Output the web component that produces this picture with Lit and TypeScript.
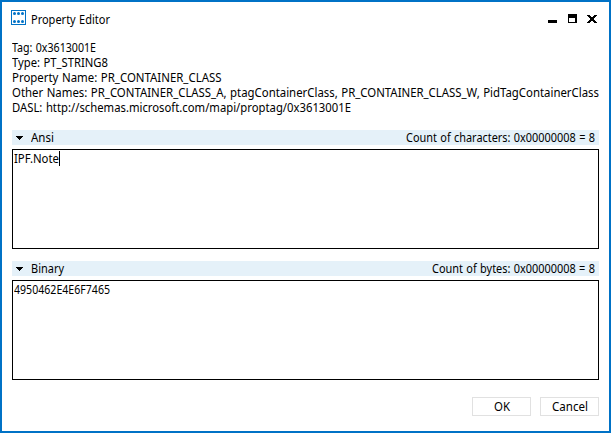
import { LitElement, html, css, svg } from "lit";
import { customElement, property } from "lit/decorators.js";

/** One line of text, condensed so that it spans a given width. */
@customElement("fit-text")
class FitText extends LitElement {
  @property({ type: Number }) width = 0;
  @property() text = "";
  static styles = css`
    :host { display: block; white-space: pre; }
    div { display: block; }
    span { display: inline-block; word-spacing: 0.6px; transform-origin: 0 0; vertical-align: top; }
  `;
  async firstUpdated() {
    await document.fonts.ready;
    const span = this.renderRoot.querySelector("span") as HTMLElement;
    const natural = span.getBoundingClientRect().width;
    span.style.transform = `scaleX(${this.width / natural})`;
  }
  render() {
    return html`<div style="width:${this.width}px"><span>${this.text}</span></div>`;
  }
}

@customElement("value-section")
class ValueSection extends LitElement {
  @property() label = "";
  @property({ type: Number }) labelWidth = 0;
  @property() count = "";
  @property({ type: Number }) countWidth = 0;
  @property() value = "";
  @property({ type: Number }) valueWidth = 0;
  @property({ type: Boolean }) focused = false;
  static styles = css`
    :host { display: block; }
    .head {
      display: flex; align-items: center; height: 15px; padding: 0 4px;
      background: #e5f1f9; line-height: 15px; margin-bottom: 4px;
    }
    .arrow { width: 7px; height: 4px; margin-right: 8px; display: block; }
    .count { margin-left: auto; }
    .box {
      box-sizing: border-box; height: 100px; border: 1px solid #000;
      padding: 1px; display: flex; align-items: flex-start; line-height: 15px;
    }
    .caret { width: 1px; height: 15px; background: #000; }
  `;
  render() {
    return html`
      <div class="head">
        <svg class="arrow" viewBox="0 0 7 4" shape-rendering="crispEdges">
          <path d="M0 0H7V1H6V2H5V3H4V4H3V3H2V2H1V1H0Z" />
        </svg>
        <fit-text .text=${this.label} .width=${this.labelWidth}></fit-text>
        <fit-text class="count" .text=${this.count} .width=${this.countWidth}></fit-text>
      </div>
      <div class="box">
        <fit-text .text=${this.value} .width=${this.valueWidth}></fit-text>
        ${this.focused ? html`<i class="caret"></i>` : null}
      </div>
    `;
  }
}

const details: [string, number][] = [
  ["Tag: 0x3613001E", 84],
  ["Type: PT_STRING8", 96],
  ["Property Name: PR_CONTAINER_CLASS", 209.5],
  ["Other Names: PR_CONTAINER_CLASS_A, ptagContainerClass, PR_CONTAINER_CLASS_W, PidTagContainerClass", 587],
  ["DASL: http://schemas.microsoft.com/mapi/proptag/0x3613001E", 339],
];

@customElement("app-root")
class AppRoot extends LitElement {
  static styles = css`
    :host {
      display: flex; flex-direction: column; box-sizing: border-box;
      width: 611px; height: 433px; border: 2px solid #0072c6; background: #fff;
      padding: 0 10px; color: #000;
      font: 11.9px/15px "Noto Sans", "Open Sans", sans-serif;
    }
    .title { display: flex; height: 23px; padding-top: 8px; margin-left: -1px; box-sizing: content-box; }
    .logo { width: 15px; height: 15px; display: block; margin-right: 5px; }
    .caption { margin-top: 2px; }
    .controls { display: block; margin: 4px 2px 0 auto; width: 49px; height: 9px; }
    .details { margin-top: 7px; height: 76px; }
    .first { margin-top: 14px; }
    .second { margin-top: 12px; }
    .actions { display: flex; justify-content: flex-end; gap: 9px; margin-top: 17px; }
    .btn {
      box-sizing: border-box; width: 59px; height: 19px; border: 1px solid #e1e1e1;
      display: flex; justify-content: center; padding-top: 1px;
    }
  `;
  render() {
    const dots = [2, 6, 10].map((x) => [2, 10].map((y) => svg`
      <circle cx=${x + 1.5} cy=${y + 1.5} r="1.5" fill="#0072c6" />`));
    return html`
      <div class="title">
        <svg class="logo" viewBox="0 0 15 15">
          <rect x=".5" y=".5" width="14" height="14" fill="#fff" stroke="#0072c6" />
          ${dots}
        </svg>
        <fit-text class="caption" .text=${"Property Editor"} .width=${79}></fit-text>
        <svg class="controls" viewBox="0 0 49 9" shape-rendering="crispEdges">
          <path d="M0 6H9V9H0Z" />
          <path fill-rule="evenodd" d="M20 0H29V9H20ZM21 4V8H27V4Z" />
          <path d="M39 1H42V2H43V3H45V2H46V1H49V2H48V3H47V4H46V6H47V7H48V8H49V9H46V8H45V7H43V8H42V9H39V8H40V7H41V6H42V4H41V3H40V2H39Z" />
        </svg>
      </div>
      <div class="details">
        ${details.map(([t, w]) => html`<fit-text .text=${t} .width=${w}></fit-text>`)}
      </div>
      <value-section class="first" label="Ansi" .labelWidth=${23}
        count="Count of characters: 0x00000008 = 8" .countWidth=${189}
        value="IPF.Note" .valueWidth=${45} focused></value-section>
      <value-section class="second" label="Binary" .labelWidth=${33}
        count="Count of bytes: 0x00000008 = 8" .countWidth=${163}
        value="4950462E4E6F7465" .valueWidth=${96}></value-section>
      <div class="actions">
        <div class="btn"><fit-text .text=${"OK"} .width=${16}></fit-text></div>
        <div class="btn"><fit-text .text=${"Cancel"} .width=${36}></fit-text></div>
      </div>
    `;
  }
}
